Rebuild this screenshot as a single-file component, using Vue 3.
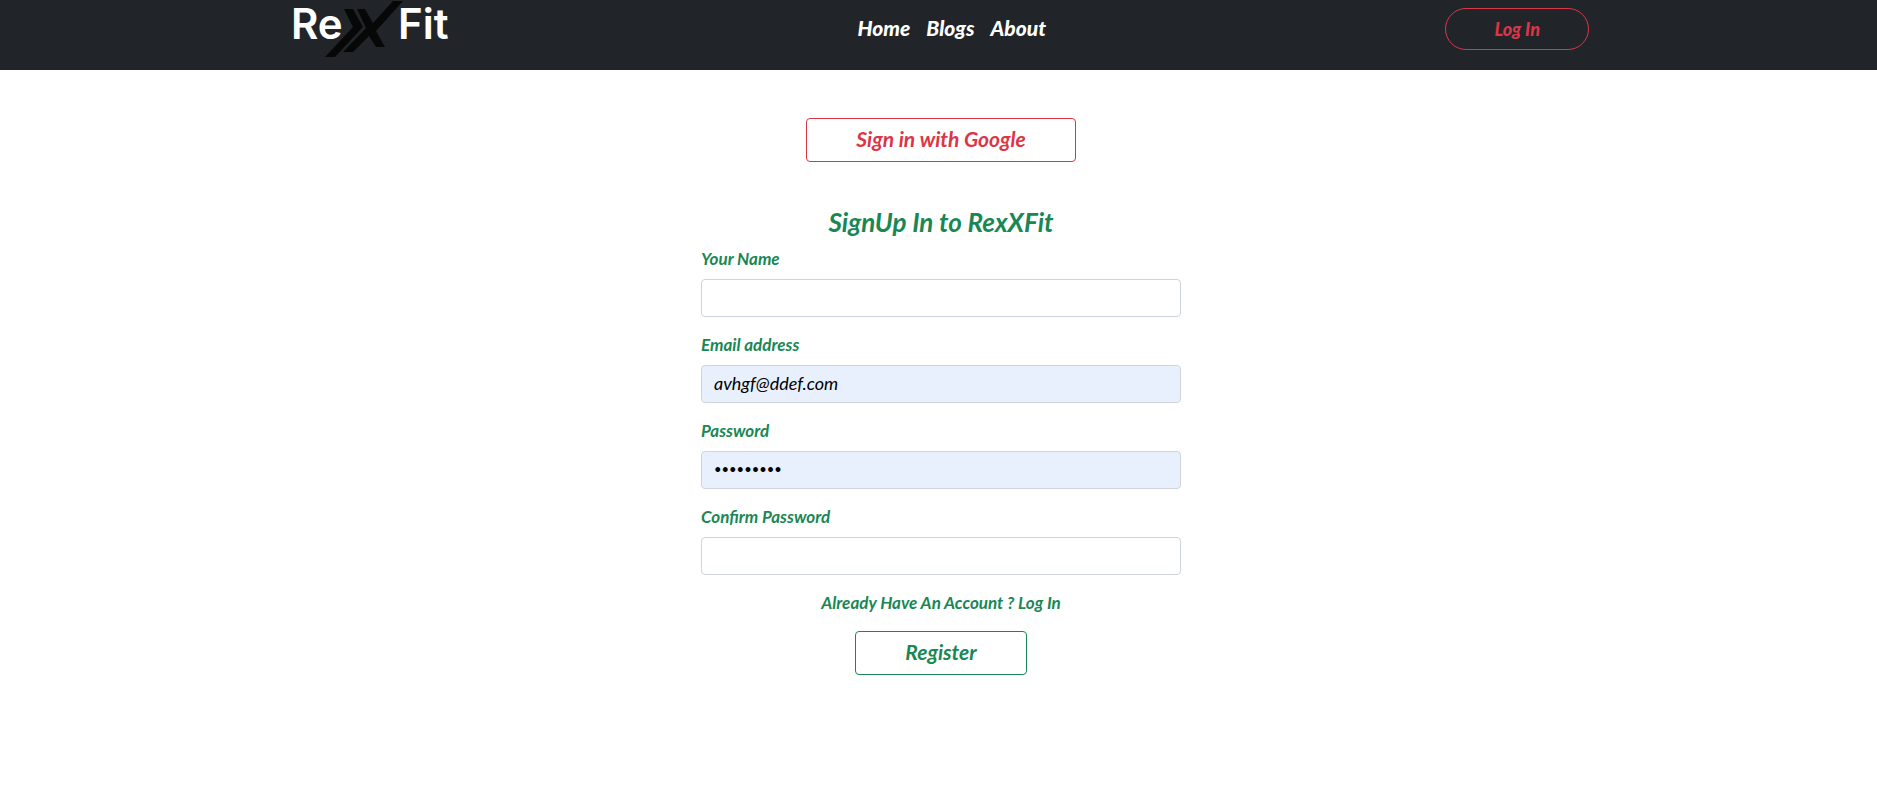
<script setup>
import { ref } from 'vue'

const links = ['Home', 'Blogs', 'About']
const fields = ref([
  { id: 'name', label: 'Your Name', type: 'text', value: '', filled: false },
  { id: 'email', label: 'Email address', type: 'email', value: 'avhgf@ddef.com', filled: true },
  { id: 'password', label: 'Password', type: 'password', value: 'abcdefghi', filled: true },
  { id: 'confirm', label: 'Confirm Password', type: 'password', value: '', filled: false },
])
</script>

<template>
  <div class="page">
    <header class="header">
      <div class="bar">
        <a class="brand" href="#" aria-label="RexX Fit">
          <svg class="logo" viewBox="0 0 165 62" width="165" height="62">
            <text class="logo-text" x="-2" y="39">Re</text>
            <text class="logo-text" x="105" y="39">Fit</text>
            <path class="mark" d="M51 9H60L70 27L42 57H32L60 27Z" />
            <path class="mark" d="M64 9H72L80 23L100 1H110L83 31L92 47H83L76 36L60 52H50L73 28Z" />
          </svg>
        </a>
        <nav class="nav">
          <a v-for="link in links" :key="link" href="#">{{ link }}</a>
        </nav>
        <button class="login" type="button">Log In</button>
      </div>
    </header>

    <main class="main">
      <button class="btn google" type="button">Sign in with Google</button>
      <form class="form" @submit.prevent>
        <h1>SignUp In to RexXFit</h1>
        <div v-for="f in fields" :key="f.id" class="field">
          <label :for="f.id">{{ f.label }}</label>
          <input :id="f.id" v-model="f.value" :type="f.type" :class="{ filled: f.filled }" autocomplete="off" />
        </div>
        <p class="already"><a href="#">Already Have An Account ? Log In</a></p>
        <button class="btn register" type="submit">Register</button>
      </form>
    </main>
  </div>
</template>

<style>
body {
  margin: 0;
  background: #fff;
}
</style>

<style scoped>
.page {
  font-family: Lato, "Open Sans", sans-serif;
  font-style: italic;
  font-size: 17px;
  line-height: 24px;
  color: #198754;
}
.page *,
.page {
  box-sizing: border-box;
}
.header {
  background: #212529;
  height: 70px;
  padding-left: 5px;
}
.bar {
  max-width: 1296px;
  margin: 0 auto;
  display: flex;
  justify-content: space-between;
  align-items: flex-start;
}
.brand,
.logo {
  display: block;
}
.logo {
  overflow: visible;
}
.logo-text {
  font-family: Inter, sans-serif;
  font-style: normal;
  font-weight: 600;
  font-size: 42px;
  fill: #fff;
}
.mark {
  fill: #060808;
}
.nav {
  display: flex;
  gap: 16px;
  padding-top: 16px;
}
.nav a {
  color: #fff;
  font-size: 21px;
  font-weight: 900;
  text-decoration: none;
}
.login {
  margin-top: 8px;
  height: 42px;
  padding: 0 48px;
  border: 1px solid #dc3545;
  border-radius: 21px;
  background: transparent;
  color: #dc3545;
  font: inherit;
  font-size: 18px;
  font-weight: 900;
}
.main {
  display: flex;
  flex-direction: column;
  align-items: center;
  padding: 48px 0 48px 5px;
}
.btn {
  height: 44px;
  padding: 0 49px 2px;
  border: 1px solid currentColor;
  border-radius: 4px;
  background: transparent;
  font: inherit;
  font-size: 21px;
  font-weight: 700;
}
.google {
  color: #dc3545;
}
.form {
  width: 100%;
  max-width: 480px;
  margin-top: 48px;
  display: flex;
  flex-direction: column;
  align-items: center;
}
h1 {
  margin: 0 0 12px;
  font-size: 26px;
  line-height: 25px;
  font-weight: 700;
}
.field {
  width: 100%;
  margin-bottom: 16px;
}
label {
  display: block;
  margin-bottom: 8px;
  font-weight: 700;
}
input {
  display: block;
  width: 100%;
  height: 38px;
  padding: 4px 12px 6px;
  border: 1px solid #ced4da;
  border-radius: 4px;
  background: #fff;
  color: #000;
  font: inherit;
  font-size: 18px;
}
input[type="password"] {
  font-size: 13px;
}
input.filled {
  background: #e8f0fe;
}
.already {
  margin: 0 0 16px;
  font-weight: 700;
}
.already a {
  color: inherit;
  text-decoration: none;
}
.register {
  color: #198754;
}
</style>
